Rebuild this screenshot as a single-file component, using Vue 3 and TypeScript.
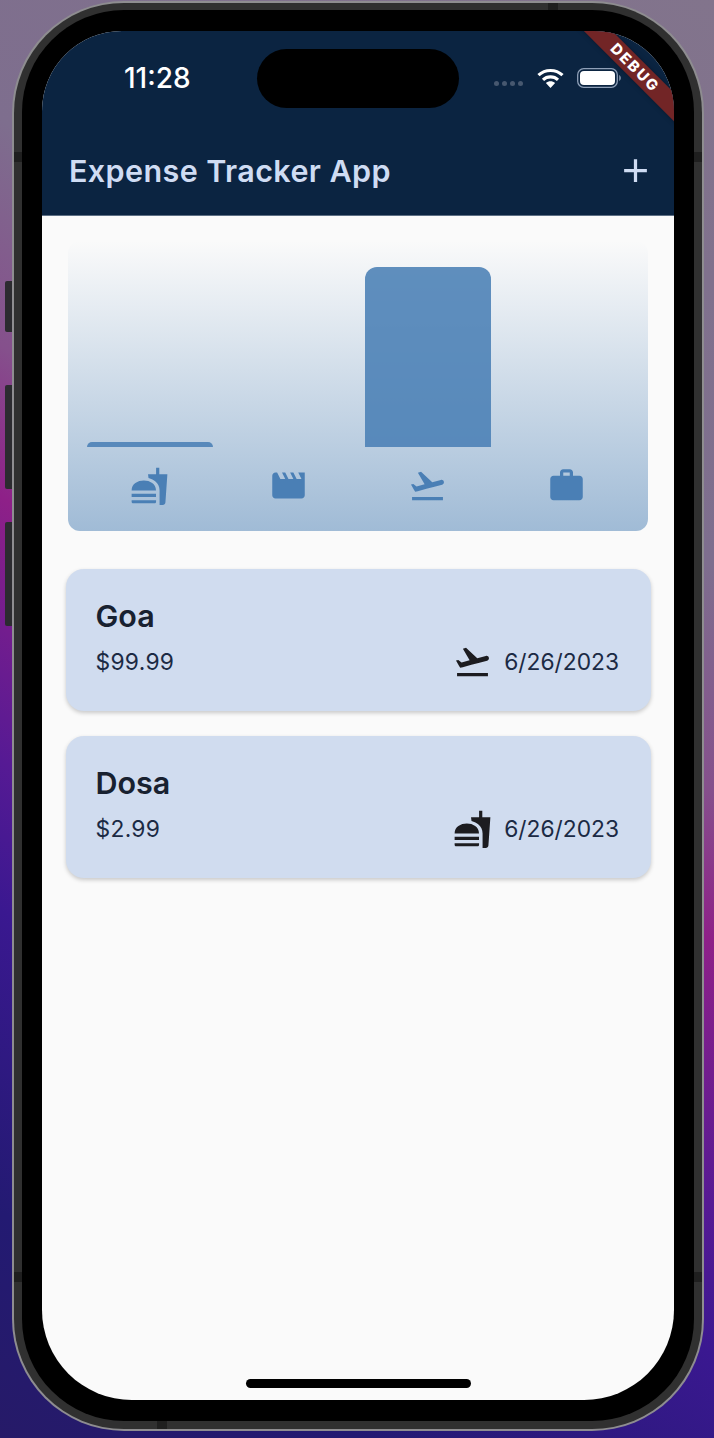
<script setup lang="ts">
import { computed } from 'vue'

const icons: Record<string, string> = {
  food: 'M1 21.98c0 .55.45 1 1.01 1h13.02c.56 0 1.01-.45 1.01-1V21H1v.98zM8.5 8.99C4.75 8.99 1 11 1 15h15c0-4-3.75-6.01-7.5-6.01zM1 17h15v2H1zM18.03 5V1h-1.97v4h-4.97l.3 2.34c1.71.47 3.31 1.32 4.27 2.26 1.5 1.47 2.54 3 2.54 5.5v8.88h1.98c.83 0 1.51-.64 1.61-1.45L23 5h-4.970z',
  leisure: 'M18 4l2 4h-3l-2-4h-2l2 4h-3l-2-4H8l2 4H7L5 4H4c-1.1 0-1.99.9-1.99 2L2 18c0 1.1.9 2 2 2h16c1.1 0 2-.9 2-2V4h-4z',
  travel: 'M2.5 19h19v2h-19zm19.57-9.36c-.21-.8-1.04-1.28-1.84-1.06L14.92 10l-6.9-6.43-1.93.51 4.14 7.17-4.97 1.33-1.97-1.54-1.45.39 1.82 3.16.77 1.33 1.6-.43 5.31-1.42 4.35-1.16L21 11.49c.81-.23 1.28-1.05 1.07-1.85z',
  work: 'M20 6h-4V4c0-1.11-.89-2-2-2h-4c-1.11 0-2 .89-2 2v2H4c-1.11 0-1.99.89-1.99 2L2 19c0 1.11.89 2 2 2h16c1.11 0 2-.89 2-2V8c0-1.11-.89-2-2-2zm-6 0h-4V4h4v2z',
}

const expenses = [
  { id: 1, title: 'Goa', amount: 99.99, date: '6/26/2023', category: 'travel' },
  { id: 2, title: 'Dosa', amount: 2.99, date: '6/26/2023', category: 'food' },
]

const categories = ['food', 'leisure', 'travel', 'work']

const buckets = computed(() => {
  const totals = categories.map((c) =>
    expenses.filter((e) => e.category === c).reduce((sum, e) => sum + e.amount, 0),
  )
  const max = Math.max(...totals)
  return categories.map((c, i) => ({ category: c, fill: (totals[i] / max) * 100 }))
})
</script>

<template>
  <div class="page">
    <div class="side-button side-one"></div>
    <div class="side-button side-two"></div>
    <div class="side-button side-three"></div>
    <div class="phone">
      <div class="bezel">
        <div class="seam seam-top"></div>
        <div class="seam seam-left-top"></div>
        <div class="seam seam-right-top"></div>
        <div class="seam seam-left-bottom"></div>
        <div class="seam seam-right-bottom"></div>
        <div class="seam seam-bottom"></div>
        <div class="glass">
          <main class="screen">
            <div class="island"></div>
            <div class="debug-banner">DEBUG</div>

            <header class="app-bar">
              <div class="status-bar">
                <span class="time">11:28</span>
                <div class="status-icons">
                  <div class="signal"><i></i><i></i><i></i><i></i></div>
                  <svg class="wifi" viewBox="0 0 27 20" width="27" height="20">
                    <path d="M1.5 7.2C8.2.9 18.8.9 25.5 7.2" fill="none" stroke="#fff" stroke-width="3.2" />
                    <path d="M6 11.8c4.2-3.9 10.8-3.9 15 0" fill="none" stroke="#fff" stroke-width="3.2" />
                    <path d="M8.900 15l4.600 5 4.600-5c-2.600-2.300-6.600-2.300-9.200 0z" fill="#fff" />
                  </svg>
                  <svg class="battery" viewBox="0 0 44 20" width="44" height="20">
                    <rect x="0.7" y="0.7" width="39.6" height="18.6" rx="6" fill="none" stroke="#8fa0b8" stroke-width="1.3" />
                    <rect x="3" y="3" width="35" height="14" rx="4" fill="#fff" />
                    <path d="M42 7c1.200.5 2 1.600 2 3s-.8 2.500-2 3z" fill="#6f8098" />
                  </svg>
                </div>
              </div>
              <div class="title-row">
                <h1 class="title">Expense Tracker App</h1>
                <svg class="add-icon" viewBox="0 0 24 24" width="39" height="39">
                  <path d="M19 13h-6v6h-2v-6H5v-2h6V5h2v6h6v2z" fill="currentColor" />
                </svg>
              </div>
            </header>

            <section class="chart">
              <div class="bars">
                <div v-for="b in buckets" :key="b.category" class="bar-slot">
                  <div class="bar" :style="{ height: b.fill + '%' }"></div>
                </div>
              </div>
              <div class="chart-icons">
                <div v-for="b in buckets" :key="b.category" class="chart-icon">
                  <svg viewBox="0 0 24 24" width="39" height="39">
                    <path :d="icons[b.category]" fill="currentColor" />
                  </svg>
                </div>
              </div>
            </section>

            <section class="list">
              <article v-for="e in expenses" :key="e.id" class="card">
                <h2 class="card-title">{{ e.title }}</h2>
                <div class="card-row">
                  <span class="amount">${{ e.amount.toFixed(2) }}</span>
                  <div class="card-meta">
                    <svg viewBox="0 0 24 24" width="39" height="39">
                      <path :d="icons[e.category]" fill="#1c1c20" />
                    </svg>
                    <span class="date">{{ e.date }}</span>
                  </div>
                </div>
              </article>
            </section>

            <div class="home-indicator"></div>
          </main>
        </div>
      </div>
    </div>
  </div>
</template>

<style scoped>
.page {
  position: relative;
  width: 714px;
  height: 1438px;
  overflow: hidden;
  padding: 1px 0 0 12px;
  box-sizing: border-box;
  font-family: Inter, "Liberation Sans", sans-serif;
  background: linear-gradient(212deg, #82748c 0%, #7e6e8e 30%, #85508c 42%, #8e2088 50%, #561a94 64%, #3a1890 72%, #231a72 88%, #261a68 100%);
}

.side-button {
  position: absolute;
  left: 5px;
  width: 8px;
  background: #2c2b30;
  border-radius: 2px 0 0 2px;
}
.side-one { top: 281px; height: 51px; }
.side-two { top: 385px; height: 104px; }
.side-three { top: 522px; height: 104px; }

.phone {
  position: relative;
  width: 692px;
  height: 1430px;
  box-sizing: border-box;
  padding: 2px;
  background: #8e8d90;
  border-radius: 112px;
}

.bezel {
  position: relative;
  height: 100%;
  box-sizing: border-box;
  padding: 7px 8px 8px;
  background: #303030;
  border-radius: 110px;
}

.seam {
  position: absolute;
  background: #1f1f1f;
}
.seam-top { top: 0; left: 534px; width: 10px; height: 8px; }
.seam-left-top { top: 149px; left: 0; width: 8px; height: 10px; }
.seam-right-top { top: 149px; right: 0; width: 8px; height: 10px; }
.seam-left-bottom { top: 1269px; left: 0; width: 8px; height: 10px; }
.seam-right-bottom { top: 1269px; right: 0; width: 8px; height: 10px; }
.seam-bottom { bottom: 0; left: 143px; width: 10px; height: 8px; }

.glass {
  position: relative;
  height: 100%;
  box-sizing: border-box;
  padding: 21px 20px;
  background: #000;
  border-radius: 102px;
}

.screen {
  position: relative;
  display: flex;
  flex-direction: column;
  height: 100%;
  overflow: hidden;
  background: #fafafa;
  border-radius: 80px 80px 90px 90px;
}

.island {
  position: absolute;
  top: 18px;
  left: 215px;
  width: 202px;
  height: 59px;
  background: #000;
  border-radius: 30px;
}

.debug-banner {
  position: absolute;
  top: 27px;
  left: 493px;
  width: 200px;
  height: 20px;
  background: #722526;
  box-shadow: 0 0 5px rgba(0, 0, 0, 0.3);
  color: #fff;
  font-size: 15px;
  font-weight: 800;
  letter-spacing: 2px;
  line-height: 20px;
  text-align: center;
  transform: rotate(45deg);
}

.app-bar {
  flex: none;
  height: 185px;
  background: #0b2441;
  color: #cfdcf3;
  border-bottom: 1px solid #5d6f84;
  box-sizing: border-box;
}

.status-bar {
  display: flex;
  justify-content: space-between;
  align-items: center;
  height: 94px;
  padding: 0 53px 0 82px;
}

.time {
  color: #fff;
  font-size: 28px;
  font-weight: 500;
}

.status-icons {
  display: flex;
  align-items: center;
  gap: 13px;
}

.signal {
  display: flex;
  gap: 3px;
  margin-top: 11px;
  margin-right: 1px;
}
.signal i {
  display: block;
  width: 5px;
  height: 5px;
  border-radius: 50%;
  background: #47586f;
}

.title-row {
  display: flex;
  justify-content: space-between;
  align-items: center;
  height: 52px;
  padding: 0 19px 0 27px;
  margin-top: 19px;
}

.title {
  margin: 0;
  font-size: 30.500px;
  font-weight: 600;
  letter-spacing: 0.4px;
}

.chart {
  flex: none;
  display: flex;
  flex-direction: column;
  height: 290px;
  margin: 25px 26px 0;
  padding: 26px 12px 26px;
  box-sizing: border-box;
  border-radius: 12px;
  background: linear-gradient(to bottom, rgba(160, 188, 214, 0), #a0bbd6);
}

.bars {
  flex: 1;
  display: flex;
  min-height: 0;
}

.bar-slot {
  flex: 1;
  display: flex;
  align-items: flex-end;
  padding: 0 6.500px;
}

.bar {
  width: 100%;
  background: rgba(74, 127, 181, 0.88);
  border-radius: 12px 12px 0 0;
}

.chart-icons {
  display: flex;
  margin-top: 19px;
}

.chart-icon {
  flex: 1;
  display: flex;
  justify-content: center;
  color: #4a7fb5;
}

.list {
  display: flex;
  flex-direction: column;
  gap: 25px;
  margin: 38px 23px 0 24px;
}

.card {
  height: 142px;
  padding: 28px 32px 0 29.500px;
  box-sizing: border-box;
  background: #d0dcef;
  border-radius: 18px;
  box-shadow: 0 2px 4px rgba(0, 0, 0, 0.2);
  color: #182130;
}

.card-title {
  margin: 0;
  font-size: 30.500px;
  font-weight: 600;
  line-height: 38px;
}

.card-row {
  display: flex;
  justify-content: space-between;
  align-items: center;
  margin-top: 7px;
  color: #1b2a44;
}

.amount,
.date {
  font-size: 22.800px;
}

.amount {
  letter-spacing: 0.3px;
}

.card-meta {
  display: flex;
  align-items: center;
  gap: 12px;
}

.home-indicator {
  margin: auto auto 12px;
  width: 225px;
  height: 9px;
  border-radius: 5px;
  background: #000;
}
</style>
